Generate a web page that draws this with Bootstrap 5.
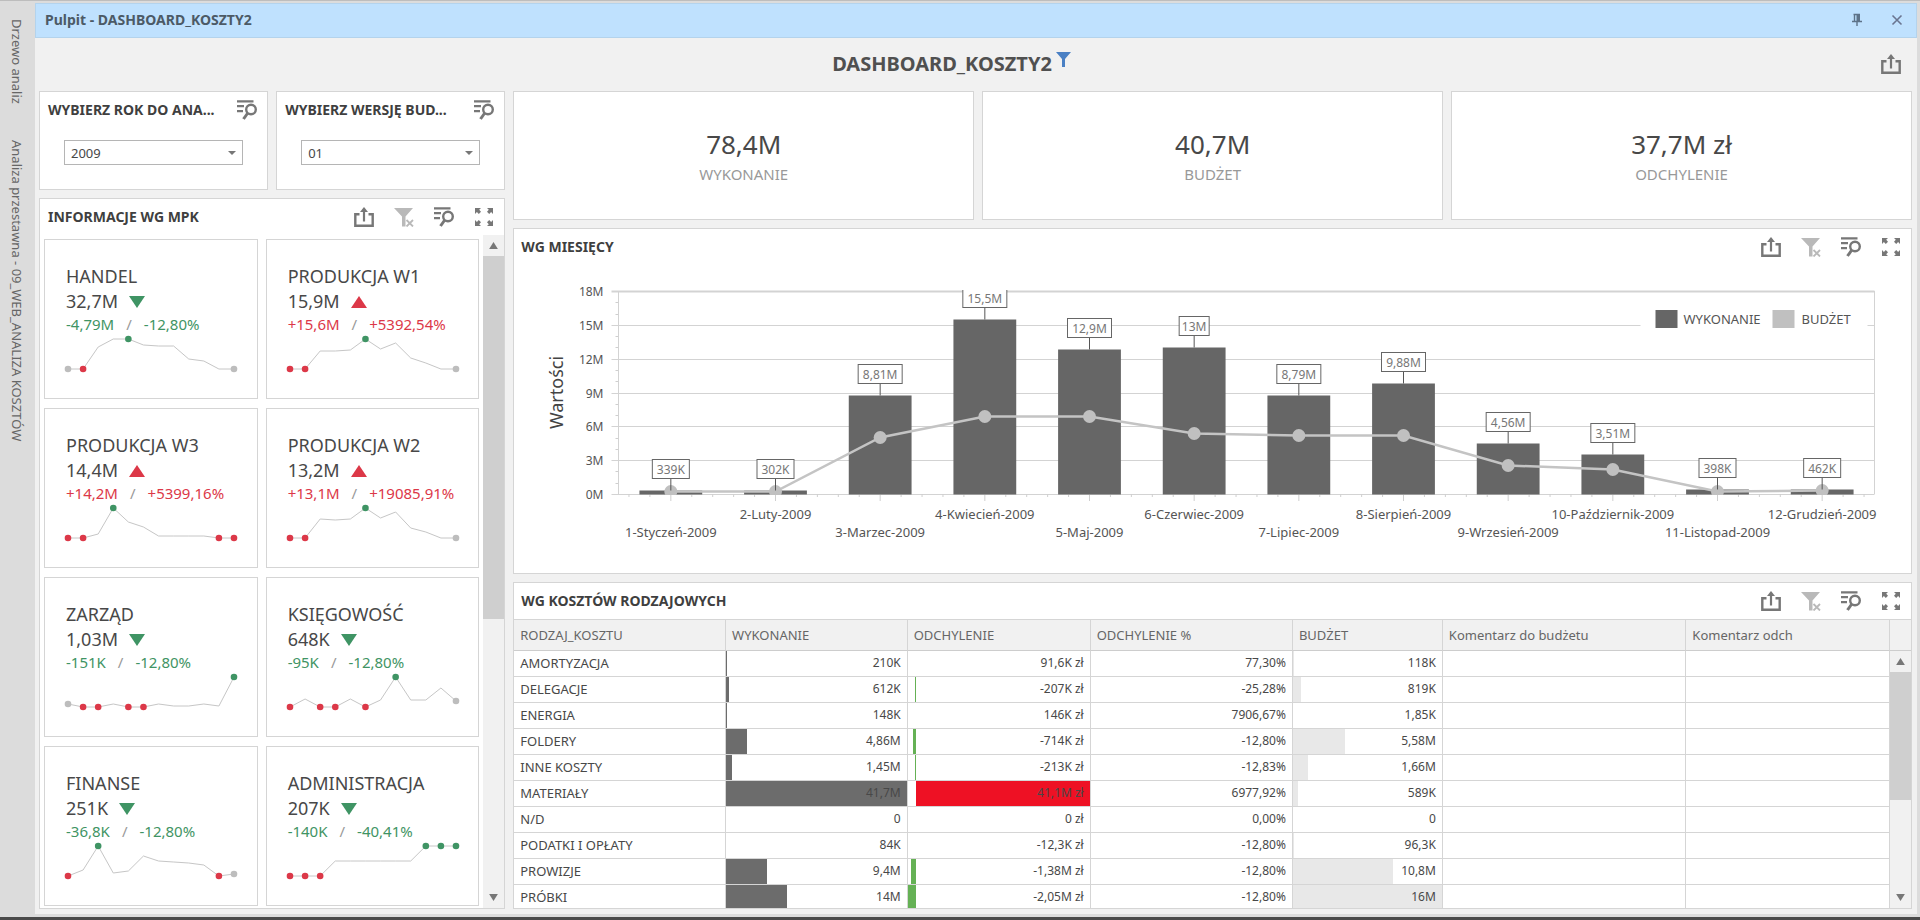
<!DOCTYPE html>
<html lang="pl">
<head>
<meta charset="utf-8">
<meta name="viewport" content="width=device-width, initial-scale=1">
<title>Pulpit - DASHBOARD_KOSZTY2</title>
<link rel="stylesheet" href="https://cdn.jsdelivr.net/npm/bootstrap@5.3.0/dist/css/bootstrap.min.css">
<style>
:root{--line:#d5d5d5;--ink:#484848;--good:#3f9464;--bad:#dc3848;--off:#bdbdbd}
body{font-family:"Noto Sans",sans-serif;font-size:12px;line-height:20px;color:var(--ink);background:#dcdcdc;border-top:1px solid #bdbdbd;border-bottom:3px solid #4a4a4a}
.side{width:35px;background:#dcdcdc;padding-top:18px}
.side a{writing-mode:vertical-rl;font-size:13px;line-height:24px;color:#666;text-decoration:none;margin-right:6px}
.workspace{margin:2px 3px 3px 0;background:#f1f1f1;min-width:0}
.titlebar{height:35px;background:#bfe1fe;border:1px solid #b4d3ec;padding:0 9px 2px;font-size:14px;font-weight:700;color:#4c5a66;gap:20px}
.headline{height:53px;padding:0 16px 2px 4px}
.headline h1{font-size:20px;line-height:24px;font-weight:700;color:#505050}
.ico-btn{border:0;background:none;padding:0;display:block;color:#777;line-height:0;flex-shrink:0}
.ico-btn svg{width:20px;height:20px}
.ico-btn:disabled{color:#b9b9b9}
.tools{gap:20px}
.board{padding:0 5px 5px 4px;min-height:0}
.col-left{flex:1 1 0;min-width:0}
.col-right{flex:3 1 0;min-width:0}
.tile{background:#fff;border:1px solid var(--line);min-width:0;min-height:0}
.tile-head{height:36px;padding:0 10px 0 8px}
.col-right .tile-head{padding-left:7px}
.tile-head h2{font-size:14px;line-height:20px;font-weight:700;color:#3f3f3f;margin:0;white-space:nowrap}
.pick{margin:12px 24px 24px;position:relative}
.pick select{appearance:none;display:block;border:1px solid #b5b5b5;border-radius:0;height:25px;padding:0 6px;font-size:13px;line-height:20px;color:var(--ink);background:#fff}
.pick::after{content:"";position:absolute;right:7px;top:11px;border:4px solid transparent;border-top:4px solid #777;border-bottom:0;pointer-events:none}
.mpk{grid-template-columns:1fr 1fr;gap:9px 8px;padding:4px}
.unit{border:1px solid var(--line);height:160px;padding:24px 22px 0 21px;min-width:0}
.unit-name,.unit-val{font-size:18px;line-height:25px;white-space:nowrap}
.unit-val{gap:11px}
.unit-delta{font-size:15px;line-height:20px;gap:12px;white-space:nowrap}
.unit-delta i{color:#999;font-style:normal}
.unit svg.spark{height:38px;width:100%;overflow:visible;display:block}
.good{color:var(--good)}.bad{color:var(--bad)}
.sbar{width:21px;background:#f1f1f1;flex-shrink:0}
.sbar-btn{height:21px;border:0;padding:0;background:#f1f1f1;color:#777;line-height:0}
.sbar-thumb{background:#cfcfcf}
.sbar-l .sbar-thumb{flex:0 0 54%}
.sbar-r .sbar-thumb{flex:0 0 50%}
.kpi-val{font-size:26px;line-height:36px}
.kpi-cap{font-size:15px;line-height:24px;color:#999}
.r1{flex:130 1 0}.r2{flex:345 1 0}.r3{flex:327 1 0}
.chart text{fill:#555;font-size:12px}
.chart .txt-m{font-size:13px}
.costs{table-layout:fixed;width:100%;border-collapse:separate;border-spacing:0}
.costs th,.costs td{border-right:1px solid var(--line);border-bottom:1px solid var(--line);padding:0 6px;white-space:nowrap;font-weight:400;height:26px}
.costs th,.th-pad{height:32px;background:#f1f1f1;border-top:1px solid var(--line);border-bottom:1px solid #cdcdcd;color:#666}
.costs th,.costs td:first-child{font-size:13px}
.costs td{position:relative;text-align:right}
.costs td:first-child{text-align:left}
.costs td b{position:relative;font-weight:400}
.cell-bar{position:absolute;top:0;bottom:0}
</style>
</head>
<body class="d-flex vh-100 overflow-hidden">
<svg class="d-none" aria-hidden="true">
  <symbol id="i-export" viewBox="0 0 20 20"><path d="M5.5 7.3H1.3V18.7H18.7V7.3H14.5" fill="none" stroke="currentColor" stroke-width="2.4"/><path d="M10 14.5V3" stroke="currentColor" stroke-width="2.2"/><path d="M6 5L10 0L14 5Z" fill="currentColor"/></symbol>
  <symbol id="i-nofilter" viewBox="0 0 20 20"><path d="M0 1H19L11.5 9.5V19.5H8V9.5Z" fill="currentColor"/><path d="M12.5 13L19 19.5M19 13L12.5 19.5" stroke="currentColor" stroke-width="1.8"/></symbol>
  <symbol id="i-list" viewBox="0 0 20 20"><path d="M0 1.3H16.5M0 6.2H7M0 11.1H6" stroke="currentColor" stroke-width="2.2"/><circle cx="14" cy="9.5" r="4.8" fill="none" stroke="currentColor" stroke-width="2.4"/><path d="M10.8 13L6.5 19" stroke="currentColor" stroke-width="3"/></symbol>
  <symbol id="i-max" viewBox="0 0 20 20"><g fill="currentColor"><path d="M1 1H7L5.2 2.8L7 4.8L4.8 7L2.9 5L1 7Z"/><path d="M19 1H13L14.8 2.8L13 4.8L15.2 7L17.1 5L19 7Z"/><path d="M1 19H7L5.2 17.2L7 15.2L4.8 13L2.9 15L1 13Z"/><path d="M19 19H13L14.8 17.2L13 15.2L15.2 13L17.1 15L19 13Z"/></g></symbol>
  <symbol id="i-up" viewBox="0 0 10 8"><path d="M5 0L10 8H0Z" fill="currentColor"/></symbol>
  <symbol id="i-down" viewBox="0 0 10 8"><path d="M5 8L10 0H0Z" fill="currentColor"/></symbol>
</svg>

<nav class="side d-flex flex-column align-items-end flex-shrink-0">
  <a href="#" class="mb-4 pb-2">Drzewo analiz</a>
  <a href="#" class="mt-1">Analiza przestawna - 09_WEB_ANALIZA KOSZTÓW</a>
</nav>

<div class="workspace d-flex flex-column flex-grow-1">
  <header class="titlebar d-flex align-items-center flex-shrink-0">
    <span class="me-auto">Pulpit - DASHBOARD_KOSZTY2</span>
    <button class="ico-btn" aria-label="Przypnij"><svg viewBox="0 0 20 20"><path d="M6.5 4.5H13M7.5 5V11M10 11V16M5 11.5H15" stroke="#5d7288" stroke-width="1.4"/><path d="M9.5 4H13V11H9.5Z" fill="#5d7288"/></svg></button>
    <button class="ico-btn" aria-label="Zamknij"><svg viewBox="0 0 20 20"><path d="M5.5 5.5L14.5 14.5M14.5 5.5L5.5 14.5" stroke="#6a7590" stroke-width="1.6"/></svg></button>
  </header>

  <div class="headline d-flex align-items-center flex-shrink-0">
    <div class="d-flex justify-content-center flex-grow-1">
      <h1 class="m-0">DASHBOARD_KOSZTY2</h1>
      <svg class="ms-1" width="16" height="16" viewBox="0 0 16 16"><path d="M0 0H15L9 7V15H6V7Z" fill="#4a80c4"/></svg>
    </div>
    <button class="ico-btn ms-3" aria-label="Eksportuj"><svg><use href="#i-export"/></svg></button>
  </div>

  <main class="board d-flex gap-2 flex-grow-1">
    <div class="col-left d-flex flex-column gap-2">
      <div class="d-flex gap-2">
        <section class="tile flex-fill w-50">
          <div class="tile-head d-flex align-items-center justify-content-between">
            <h2 id="lbl-year">WYBIERZ ROK DO ANA...</h2>
            <button class="ico-btn" aria-label="Wybór"><svg><use href="#i-list"/></svg></button>
          </div>
          <div class="pick"><select class="w-100" aria-labelledby="lbl-year"><option>2009</option></select></div>
        </section>
        <section class="tile flex-fill w-50">
          <div class="tile-head d-flex align-items-center justify-content-between">
            <h2 id="lbl-ver">WYBIERZ WERSJĘ BUD...</h2>
            <button class="ico-btn" aria-label="Wybór"><svg><use href="#i-list"/></svg></button>
          </div>
          <div class="pick"><select class="w-100" aria-labelledby="lbl-ver"><option>01</option></select></div>
        </section>
      </div>
      <section class="tile d-flex flex-column flex-grow-1 overflow-hidden">
        <div class="tile-head d-flex align-items-center flex-shrink-0">
          <h2 class="me-auto">INFORMACJE WG MPK</h2>
          <div class="tools d-flex"></div>
        </div>
        <div class="d-flex flex-grow-1 overflow-hidden">
          <div class="mpk d-grid flex-grow-1 align-content-start" id="mpk"></div>
          <div class="sbar sbar-l d-flex flex-column"></div>
        </div>
      </section>
    </div>

    <div class="col-right d-flex flex-column gap-2">
      <div class="r1 d-flex gap-2">
        <section class="tile flex-fill w-25 d-flex flex-column justify-content-center text-center"><div class="kpi-val">78,4M</div><div class="kpi-cap">WYKONANIE</div></section>
        <section class="tile flex-fill w-25 d-flex flex-column justify-content-center text-center"><div class="kpi-val">40,7M</div><div class="kpi-cap">BUDŻET</div></section>
        <section class="tile flex-fill w-25 d-flex flex-column justify-content-center text-center"><div class="kpi-val">37,7M zł</div><div class="kpi-cap">ODCHYLENIE</div></section>
      </div>
      <section class="tile r2 d-flex flex-column overflow-hidden">
        <div class="tile-head d-flex align-items-center flex-shrink-0">
          <h2 class="me-auto">WG MIESIĘCY</h2>
          <div class="tools d-flex"></div>
        </div>
        <div class="chart flex-grow-1 overflow-hidden" id="chart"></div>
      </section>
      <section class="tile r3 d-flex flex-column overflow-hidden">
        <div class="tile-head d-flex align-items-center flex-shrink-0">
          <h2 class="me-auto">WG KOSZTÓW RODZAJOWYCH</h2>
          <div class="tools d-flex"></div>
        </div>
        <div class="d-flex flex-grow-1 overflow-hidden">
          <div class="flex-grow-1 overflow-hidden">
            <table class="costs">
              <colgroup><col style="width:15.4%"><col style="width:13.2%"><col style="width:13.3%"><col style="width:14.7%"><col style="width:10.9%"><col style="width:17.7%"><col></colgroup>
              <thead><tr><th>RODZAJ_KOSZTU</th><th>WYKONANIE</th><th>ODCHYLENIE</th><th>ODCHYLENIE %</th><th>BUDŻET</th><th>Komentarz do budżetu</th><th>Komentarz odch</th></tr></thead>
              <tbody id="costs"></tbody>
            </table>
          </div>
          <div class="d-flex flex-column">
            <div class="th-pad flex-shrink-0"></div>
            <div class="sbar sbar-r d-flex flex-column flex-grow-1 flex-shrink-1"></div>
          </div>
        </div>
      </section>
    </div>
  </main>
</div>

<script src="https://cdn.jsdelivr.net/npm/bootstrap@5.3.0/dist/js/bootstrap.bundle.min.js"></script>
<script>
const $$ = s => document.querySelectorAll(s);

$$('.tools').forEach(t => {
  t.innerHTML = [['export','Eksportuj'],['nofilter','Wyczyść filtr'],['list','Wybór'],['max','Maksymalizuj']]
    .map(([i,l]) => `<button class="ico-btn" aria-label="${l}"${i=='nofilter'?' disabled':''}><svg><use href="#i-${i}"/></svg></button>`).join('');
});
$$('.sbar').forEach(s => {
  s.innerHTML = `<button class="sbar-btn" aria-label="W górę"><svg width="9" height="7"><use href="#i-up"/></svg></button><div class="sbar-thumb"></div><button class="sbar-btn mt-auto" aria-label="W dół"><svg width="9" height="7"><use href="#i-down"/></svg></button>`;
});

/* unit, value, difference, percent, worse than plan, series (0 = top, 30 = bottom), dots */
const units = [
 ['HANDEL','32,7M','-4,79M','-12,80%',0,[30,30,8,0,0,6,7,7,20,22,30,30],{0:'off',1:'bad',4:'good',11:'off'}],
 ['PRODUKCJA W1','15,9M','+15,6M','+5392,54%',1,[30,30,12,12,11,0,10,4,19,24,30,30],{0:'bad',1:'bad',5:'good',11:'off'}],
 ['PRODUKCJA W3','14,4M','+14,2M','+5399,16%',1,[30,30,26,0,14,19,28,28,28,28,30,30],{0:'bad',1:'bad',3:'good',10:'bad',11:'bad'}],
 ['PRODUKCJA W2','13,2M','+13,1M','+19085,91%',1,[30,30,11,12,11,0,10,4,20,24,30,30],{0:'bad',1:'bad',5:'good',11:'off'}],
 ['ZARZĄD','1,03M','-151K','-12,80%',0,[27,30,30,27,30,30,27,29,29,27,29,0],{0:'off',1:'bad',2:'bad',4:'bad',5:'bad',11:'good'}],
 ['KSIĘGOWOŚĆ','648K','-95K','-12,80%',0,[30,22,30,30,22,30,23,0,23,23,11,24],{0:'bad',2:'bad',3:'bad',5:'bad',7:'good',11:'off'}],
 ['FINANSE','251K','-36,8K','-12,80%',0,[30,24,0,27,25,10,15,16,17,19,30,28],{0:'bad',2:'good',10:'bad',11:'off'}],
 ['ADMINISTRACJA','207K','-140K','-40,41%',0,[30,30,30,15,15,15,15,15,15,0,0,0],{0:'bad',1:'bad',2:'bad',9:'good',10:'good',11:'good'}]];
document.getElementById('mpk').innerHTML = units.map(([n,v,d,p,up]) => {
  const c = up ? 'bad' : 'good';
  return `<article class="unit"><div class="unit-name">${n}</div>
  <div class="unit-val d-flex align-items-center"><span>${v}</span><svg class="${c}" width="16" height="12" viewBox="0 0 16 12"><path d="${up?'M8 0L16 12H0Z':'M0 0H16L8 12Z'}" fill="currentColor"/></svg></div>
  <div class="unit-delta d-flex ${c}"><span>${d}</span><i>/</i><span>${p}</span></div><svg class="spark"></svg></article>`;
}).join('');
function sparks(){
  $$('.spark').forEach((s,k) => {
    const w = s.clientWidth - 3, ys = units[k][5], x = i => 2 + i*w/11;
    s.innerHTML = `<polyline fill="none" stroke="#c6c6c6" points="${ys.map((y,i)=>x(i)+','+(y+5)).join(' ')}"/>` +
      Object.entries(units[k][6]).map(([i,c]) => `<circle cx="${x(+i)}" cy="${ys[i]+5}" r="3.3" fill="var(--${c})"/>`).join('');
  });
}

/* month, bar label, actual (M), budget (M) */
const months = [['1-Styczeń-2009','339K',.34,.3],['2-Luty-2009','302K',.34,.25],['3-Marzec-2009','8,81M',8.81,5.09],['4-Kwiecień-2009','15,5M',15.55,6.89],['5-Maj-2009','12,9M',12.9,6.89],['6-Czerwiec-2009','13M',13,5.44],['7-Lipiec-2009','8,79M',8.79,5.23],['8-Sierpień-2009','9,88M',9.88,5.23],['9-Wrzesień-2009','4,56M',4.56,2.57],['10-Październik-2009','3,51M',3.55,2.22],['11-Listopad-2009','398K',.44,.25],['12-Grudzień-2009','462K',.46,.35]];
function chart(){
  const box = document.getElementById('chart'), W = box.clientWidth, H = box.clientHeight;
  const L = 104.5, R = W-36.5, T = 26, B = H-78, s = (R-L)/12, Y = v => Math.round(B-v*(B-T)/18)+.5, X = i => L+s*(i+.5);
  let g = '';
  for(let v=0; v<=18; v+=3){
    g += `<path d="M${L-7} ${Y(v)}H${R}" stroke="#d3d3d3" stroke-width="${v==18?2:1}"/><text x="${L-15}" y="${Y(v)+4}" text-anchor="end">${v}M</text>`;
    if(v) g += `<path d="M${L-3} ${Y(v-1)}H${L}M${L-3} ${Y(v-2)}H${L}" stroke="#cfcfcf"/>`;
  }
  g += `<path d="M${L} ${T}V${B}M${R} ${T}V${B}" stroke="#d3d3d3"/>`;
  for(let i=0; i<60; i++){ const x = L+s*(i+.5)/5; g += `<path d="M${x} ${B}v${i%5==2?7:3}" stroke="#cfcfcf"/>`; }
  g += `<rect x="${R-234}" y="${T+12}" width="227" height="32" fill="#fff"/><rect x="${R-219}" y="${T+19}" width="22" height="18" fill="#666"/><rect x="${R-102}" y="${T+19}" width="22" height="18" fill="#c0c0c0"/>
  <text class="txt-m" x="${R-191}" y="${T+33}">WYKONANIE</text><text class="txt-m" x="${R-73}" y="${T+33}">BUDŻET</text>`;
  months.forEach(([n,l,a],i) => {
    g += `<rect x="${X(i)-s*.3}" y="${Y(a)}" width="${s*.6}" height="${Y(0)-Y(a)}" fill="#666"/><text class="txt-m" x="${X(i)}" y="${B+(i%2?25:43)}" text-anchor="middle">${n}</text>`;
  });
  g += `<g clip-path="url(#plot)"><polyline fill="none" stroke="#c4c4c4" stroke-width="2.5" points="${months.map((m,i)=>X(i)+','+Y(m[3])).join(' ')}"/>` + months.map((m,i)=>`<circle cx="${X(i)}" cy="${Y(m[3])}" r="6.5" fill="#c0c0c0"/>`).join('');
  months.forEach(([n,l,a],i) => {
    const w = l.length*7+9, y = Y(a);
    g += `<path d="M${X(i)} ${y-12}V${y}" stroke="#555"/><rect x="${X(i)-w/2}" y="${y-31}" width="${w}" height="19" fill="#fff" stroke="#666"/><text x="${X(i)}" y="${y-17}" text-anchor="middle" style="fill:#777">${l}</text>`;
  });
  g += `</g><clipPath id="plot"><rect x="${L}" y="${T-1}" width="${R-L}" height="${B-T+2}"/></clipPath>`;
  g += `<text transform="translate(49 ${(T+B)/2}) rotate(-90)" text-anchor="middle" style="font-size:18px;fill:#444">Wartości</text>`;
  box.innerHTML = `<svg class="d-block" width="${W}" height="${H}">${g}</svg>`;
}

/* kind, actual, difference, percent, budget, bar sizes in millions */
const costs = [['AMORTYZACJA','210K','91,6K zł','77,30%','118K',.21,.09,.118],['DELEGACJE','612K','-207K zł','-25,28%','819K',.612,-.207,.819],['ENERGIA','148K','146K zł','7906,67%','1,85K',.148,.146,0],['FOLDERY','4,86M','-714K zł','-12,80%','5,58M',4.86,-.714,5.58],['INNE KOSZTY','1,45M','-213K zł','-12,83%','1,66M',1.45,-.213,1.66],['MATERIAŁY','41,7M','41,1M zł','6977,92%','589K',41.7,41.1,.589],['N/D','0','0 zł','0,00%','0',0,0,0],['PODATKI I OPŁATY','84K','-12,3K zł','-12,80%','96,3K',.084,-.012,.096],['PROWIZJE','9,4M','-1,38M zł','-12,80%','10,8M',9.4,-1.38,10.8],['PRÓBKI','14M','-2,05M zł','-12,80%','16M',14,-2.05,16]];
const bar = (l,w,c) => w > .3 ? `<span class="cell-bar" style="left:${l}%;width:${w}%;background:${c}"></span>` : '';
document.getElementById('costs').innerHTML = costs.map(([k,a,d,p,b,av,dv,bv]) => {
  const zero = 4.75, dw = Math.abs(dv)/43.15*100;
  return `<tr><td>${k}</td><td>${bar(0,av/41.7*100,'#6c6c6c')}<b>${a}</b></td><td>${dv>1?bar(zero,dw,'#ee1124'):dv<0?bar(zero-dw,dw,'#65b155'):''}<b>${d}</b></td><td>${p}</td><td>${bar(0,bv/16*100,'#e8e8e8')}<b>${b}</b></td><td></td><td></td></tr>`;
}).join('');
function draw(){ sparks(); chart(); }
draw();
addEventListener('resize', draw);
</script>
</body>
</html>
